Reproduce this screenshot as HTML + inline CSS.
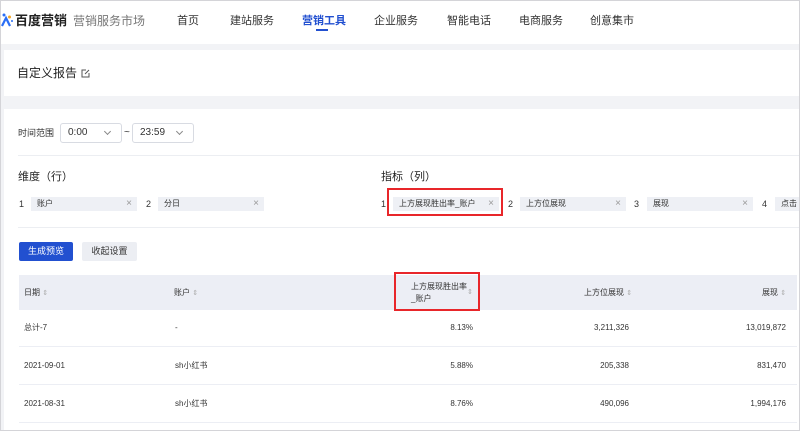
<!DOCTYPE html>
<html><head><meta charset="utf-8"><style>
*{margin:0;padding:0;box-sizing:border-box}
body{width:800px;height:431px;overflow:hidden;background:#f2f3f6;font-family:"Liberation Sans","Noto Sans CJK SC",sans-serif;color:#333;position:relative}
.abs{position:absolute;white-space:nowrap;line-height:12px}
.frame{position:absolute;left:0;top:0;width:800px;height:431px;border:1px solid #d4d4d8;pointer-events:none}
.hdr{position:absolute;left:0;top:0;width:800px;height:44px;background:#fff}
.card{position:absolute;left:4px;width:796px;background:#fff}
.nav{font-size:11px;color:#333;top:15px}
.sel{position:absolute;top:123px;height:20px;border:1px solid #d8dbe2;border-radius:3px;background:#fff;font-size:10px;line-height:18px;padding-left:7px;color:#333}
.sel:after{content:"";position:absolute;right:11px;top:5px;width:4px;height:4px;border-right:1px solid #888;border-bottom:1px solid #888;transform:rotate(45deg)}
.tag{position:absolute;top:197px;height:14px;background:#eef0f5;font-size:8px;line-height:14px;padding-left:6px;color:#333}
.tag:after{content:"×";position:absolute;right:5px;top:0;color:#999;font-size:10px;line-height:14px}
.num{font-size:9px;color:#333}
.th{font-size:8px;color:#333}
.td{font-size:8px;color:#333}
.so{color:#aaa;font-size:7px}
.red{position:absolute;border:2px solid #e8262a}
</style></head><body>
<div class="hdr"></div>
<svg class="abs" style="left:1px;top:13px" width="12" height="14" viewBox="0 0 12 14"><circle cx="3" cy="2" r="1.5" fill="#2a6ef5"/><circle cx="8.5" cy="4" r="1.5" fill="#f5a623"/><path d="M1 13 L5 5 L9 13" stroke="#2a6ef5" stroke-width="2.2" fill="none"/><circle cx="11" cy="8" r="1" fill="#2a6ef5"/></svg>
<div class="abs" style="left:15px;top:13px;font-size:13px;line-height:16px;font-weight:bold;color:#222">百度营销</div>
<div class="abs" style="left:73px;top:14px;font-size:12px;line-height:14px;color:#777">营销服务市场</div>
<div class="abs nav" style="left:177px">首页</div>
<div class="abs nav" style="left:230px">建站服务</div>
<div class="abs nav" style="left:302px;color:#2250d0;font-weight:bold">营销工具</div>
<div class="abs" style="left:316px;top:29px;width:12px;height:2px;background:#2250d0"></div>
<div class="abs nav" style="left:374px">企业服务</div>
<div class="abs nav" style="left:447px">智能电话</div>
<div class="abs nav" style="left:519px">电商服务</div>
<div class="abs nav" style="left:590px">创意集市</div>

<div class="card" style="top:50px;height:46px"></div>
<div class="abs" style="left:17px;top:66px;font-size:12px;line-height:14px;color:#222">自定义报告</div>
<svg class="abs" style="left:81px;top:69px" width="9" height="9" viewBox="0 0 9 9"><path d="M5 1H1V8H8V4" stroke="#555" fill="none"/><path d="M4 5L8 1" stroke="#555"/></svg>

<div class="card" style="top:109px;height:322px"></div>
<div class="abs" style="left:18px;top:127px;font-size:9px">时间范围</div>
<div class="sel" style="left:60px;width:62px">0:00</div>
<div class="abs" style="left:124px;top:127px;font-size:10px">~</div>
<div class="sel" style="left:132px;width:62px">23:59</div>
<div class="abs" style="left:18px;top:155px;width:782px;height:1px;background:#eceef2"></div>

<div class="abs" style="left:18px;top:171px;font-size:11px;color:#222">维度（行）</div>
<div class="abs num" style="left:19px;top:198px">1</div>
<div class="tag" style="left:31px;width:106px">账户</div>
<div class="abs num" style="left:146px;top:198px">2</div>
<div class="tag" style="left:158px;width:106px">分日</div>

<div class="abs" style="left:381px;top:171px;font-size:11px;color:#222">指标（列）</div>
<div class="abs num" style="left:381px;top:198px">1</div>
<div class="tag" style="left:393px;width:106px">上方展现胜出率_账户</div>
<div class="red" style="left:387px;top:188px;width:116px;height:28px"></div>
<div class="abs num" style="left:508px;top:198px">2</div>
<div class="tag" style="left:520px;width:106px">上方位展现</div>
<div class="abs num" style="left:634px;top:198px">3</div>
<div class="tag" style="left:647px;width:106px">展现</div>
<div class="abs num" style="left:762px;top:198px">4</div>
<div class="tag" style="left:775px;width:40px">点击</div>
<div class="abs" style="left:18px;top:227px;width:782px;height:1px;background:#eceef2"></div>

<div class="abs" style="left:19px;top:242px;width:54px;height:19px;background:#2250d0;border-radius:2px;color:#fff;font-size:9px;line-height:19px;text-align:center">生成预览</div>
<div class="abs" style="left:82px;top:242px;width:55px;height:19px;background:#eceef3;border-radius:2px;color:#333;font-size:9px;line-height:19px;text-align:center">收起设置</div>

<div class="abs" style="left:19px;top:275px;width:778px;height:35px;background:#eceef5"></div>
<div class="abs th" style="left:24px;top:287px">日期 <span class="so">⇕</span></div>
<div class="abs th" style="left:174px;top:287px">账户 <span class="so">⇕</span></div>
<div class="abs th" style="left:411px;top:281px;white-space:normal;width:56px">上方展现胜出率_账户</div>
<div class="abs so" style="left:467px;top:287px">⇕</div>
<div class="red" style="left:394px;top:272px;width:86px;height:39px"></div>
<div class="abs th" style="left:584px;top:287px">上方位展现 <span class="so">⇕</span></div>
<div class="abs th" style="left:762px;top:287px">展现 <span class="so">⇕</span></div>

<div class="abs" style="left:19px;top:346px;width:778px;height:1px;background:#eceef4"></div>
<div class="abs" style="left:19px;top:384px;width:778px;height:1px;background:#eceef4"></div>
<div class="abs" style="left:19px;top:422px;width:778px;height:1px;background:#eceef4"></div>

<div class="abs td" style="left:24px;top:322px">总计-7</div>
<div class="abs td" style="left:175px;top:322px">-</div>
<div class="abs td" style="right:327px;top:322px">8.13%</div>
<div class="abs td" style="right:171px;top:322px">3,211,326</div>
<div class="abs td" style="right:14px;top:322px">13,019,872</div>

<div class="abs td" style="left:24px;top:360px">2021-09-01</div>
<div class="abs td" style="left:175px;top:360px">sh小红书</div>
<div class="abs td" style="right:327px;top:360px">5.88%</div>
<div class="abs td" style="right:171px;top:360px">205,338</div>
<div class="abs td" style="right:14px;top:360px">831,470</div>

<div class="abs td" style="left:24px;top:398px">2021-08-31</div>
<div class="abs td" style="left:175px;top:398px">sh小红书</div>
<div class="abs td" style="right:327px;top:398px">8.76%</div>
<div class="abs td" style="right:171px;top:398px">490,096</div>
<div class="abs td" style="right:14px;top:398px">1,994,176</div>

<div class="frame"></div>
</body></html>
